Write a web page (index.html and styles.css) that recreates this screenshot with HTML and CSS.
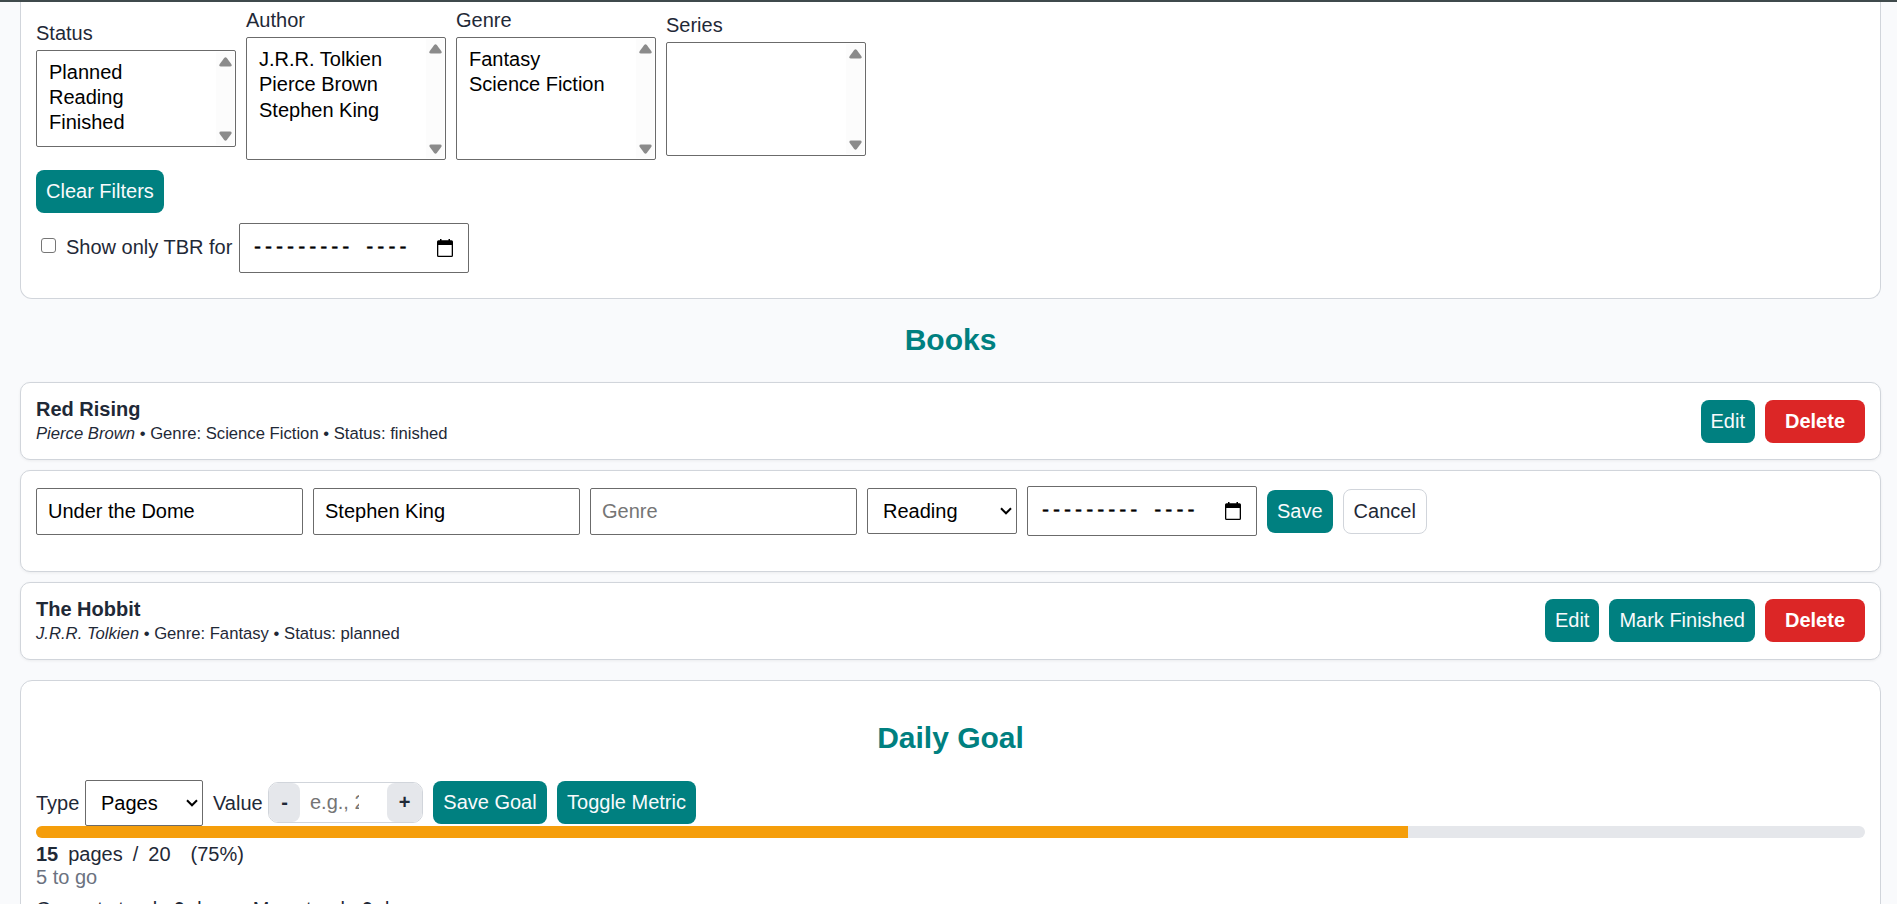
FILE: index.html
```
<!DOCTYPE html>
<html lang="en">
<head>
<meta charset="utf-8">
<title>Books</title>
<link rel="stylesheet" href="styles.css">
</head>
<body>
<svg class="defs" aria-hidden="true">
  <symbol id="up" viewBox="0 0 13 10"><path d="M5.2 1Q6.5-.4 7.8 1L12.4 7.3Q13.200 9.500 11 9.500H2Q-.2 9.500.6 7.300Z" fill="#8b8b8b"/></symbol>
  <symbol id="cal" viewBox="0 0 16 18"><path d="M3 0h1.500v1.300h7V0H13v1.300h1.500Q16 1.300 16 2.800v13.700Q16 18 14.500 18h-13Q0 18 0 16.500V2.800Q0 1.300 1.500 1.300H3ZM1.300 6v10.700h13.400V6Z" fill="#000" fill-rule="evenodd"/></symbol>
  <symbol id="chev" viewBox="0 0 12 8"><path d="M1 1.300 6 6.300 11 1.300" fill="none" stroke="#000" stroke-width="2"/></symbol>
</svg>
<div class="topbar"></div>
<main class="page">
  <section class="card filters">
    <div class="filter-row">
      <div class="field"><span>Status</span>
        <div class="listbox h-status"><div class="options"><div>Planned</div><div>Reading</div><div>Finished</div></div><div class="track"><svg><use href="#up"/></svg><svg class="down"><use href="#up"/></svg></div></div></div>
      <div class="field"><span>Author</span>
        <div class="listbox h-tall"><div class="options"><div>J.R.R. Tolkien</div><div>Pierce Brown</div><div>Stephen King</div></div><div class="track"><svg><use href="#up"/></svg><svg class="down"><use href="#up"/></svg></div></div></div>
      <div class="field"><span>Genre</span>
        <div class="listbox h-tall"><div class="options"><div>Fantasy</div><div>Science Fiction</div></div><div class="track"><svg><use href="#up"/></svg><svg class="down"><use href="#up"/></svg></div></div></div>
      <div class="field"><span>Series</span>
        <div class="listbox h-series"><div class="options"></div><div class="track"><svg><use href="#up"/></svg><svg class="down"><use href="#up"/></svg></div></div></div>
    </div>
    <button class="btn">Clear Filters</button>
    <div class="tbr"><input type="checkbox" class="check"><span class="tbr-label">Show only TBR for</span>
      <div class="month"><span class="dashes">---------</span><span class="dashes year">----</span><svg class="cal"><use href="#cal"/></svg></div></div>
  </section>

  <h2>Books</h2>
  <div class="books">
    <article class="card book">
      <div class="info"><div class="title">Red Rising</div><div class="meta"><em>Pierce Brown</em> • Genre: Science Fiction • Status: finished</div></div>
      <div class="actions"><button class="btn">Edit</button><button class="btn danger">Delete</button></div>
    </article>
    <article class="card edit">
      <input class="text" value="Under the Dome"><input class="text" value="Stephen King"><input class="text" placeholder="Genre">
      <div class="select w-status"><span>Reading</span><svg class="chev"><use href="#chev"/></svg></div>
      <div class="month"><span class="dashes">---------</span><span class="dashes year">----</span><svg class="cal"><use href="#cal"/></svg></div>
      <button class="btn">Save</button><button class="btn ghost">Cancel</button>
    </article>
    <article class="card book">
      <div class="info"><div class="title">The Hobbit</div><div class="meta"><em>J.R.R. Tolkien</em> • Genre: Fantasy • Status: planned</div></div>
      <div class="actions last"><button class="btn">Edit</button><button class="btn">Mark Finished</button><button class="btn danger">Delete</button></div>
    </article>
  </div>

  <section class="card goal">
    <h2>Daily Goal</h2>
    <div class="goal-row">
      <span class="type">Type</span>
      <div class="select w-type"><span>Pages</span><svg class="chev"><use href="#chev"/></svg></div>
      <span class="value">Value</span>
      <div class="stepper"><button class="minus">-</button><span class="num">e.g., 20</span><button class="plus">+</button></div>
      <button class="btn save-goal">Save Goal</button><button class="btn toggle">Toggle Metric</button>
    </div>
    <div class="bar"><div class="fill" style="width:75%"></div></div>
    <div class="stats"><b>15</b><span class="unit">pages</span><span class="slash">/</span><span class="total">20</span><span class="pct">(75%)</span></div>
    <div class="togo">5 to go</div>
    <div class="streak"><span>Current streak: <b>0</b> days</span><span>Max streak: <b>0</b> days</span></div>
  </section>
</main>
</body>
</html>
```
FILE: styles.css
```
* { box-sizing: border-box; }
html { overflow: hidden; }
body {
  margin: 0;
  height: 904px;
  overflow: hidden;
  background: #f9fafc;
  color: #1f2937;
  font: 20px/23px "Liberation Sans", Arial, sans-serif;
}
.defs { display: block; width: 0; height: 0; }
.topbar { height: 2px; background: #3f4a4c; }
.page { padding: 0 16px 0 20px; }
.card {
  background: #fff;
  border: 1px solid #d1d5db;
  border-radius: 10px;
  box-shadow: 0 1px 3px rgba(0, 0, 0, .06);
}
.filters {
  height: 297px;
  padding: 7px 15px 0;
  border-top: 0;
  border-radius: 0 0 12px 12px;
  box-shadow: none;
}
.filter-row { display: flex; align-items: center; gap: 10px; margin-bottom: 10px; }
.field { display: flex; flex-direction: column; gap: 5px; }
.listbox {
  display: flex;
  width: 200px;
  padding: 1px;
  background: #fff;
  border: 1px solid #6b6b6b;
  border-radius: 2px;
  color: #000;
}
.h-status { height: 97px; }
.h-tall { height: 123px; }
.h-series { height: 114px; }
.options { flex: 1; padding: 8px 11px; line-height: 25px; }
.h-tall .options { line-height: 25.300px; }
.track {
  display: flex;
  flex-direction: column;
  justify-content: space-between;
  align-items: center;
  width: 18px;
  padding: 5px 0 4px;
  background: #fcfcfc;
}
.track svg { width: 13px; height: 10px; }
.track .down { transform: rotate(180deg); }
.btn {
  height: 43px;
  padding: 0 10px;
  border: 0;
  border-radius: 8px;
  background: teal;
  color: #f9fafc;
  font: inherit;
  white-space: nowrap;
  display: block;
}
.danger { width: 100px; background: #dc2626; color: #fff; font-weight: bold; }
.ghost { height: 45px; border: 1px solid #d1d5db; background: #fff; color: #1f2937; }
.tbr { display: flex; align-items: center; margin-top: 10px; height: 50px; }
.check {
  appearance: none;
  width: 15px;
  height: 15px;
  margin: 0 10px 5px 5px;
  border: 1px solid #767676;
  border-radius: 3px;
  background: #fff;
}
.tbr-label { width: 173px; padding-bottom: 2px; white-space: nowrap; }
.month {
  display: flex;
  align-items: center;
  width: 230px;
  height: 50px;
  padding: 0 15px 0 12px;
  border: 1px solid #6b6b6b;
  border-radius: 2px;
  background: #fff;
  color: #000;
}
.dashes { font-family: "Liberation Mono", monospace; font-size: 18.400px; -webkit-text-stroke: .5px #000; }
.year { margin-left: 13px; }
.cal { width: 16px; height: 18px; margin-left: auto; }
h2 { margin: 0; text-align: center; color: teal; font-size: 30px; line-height: 34px; }
.filters + h2 { padding: 24px 0 25px; }
.books { display: grid; gap: 10px; }
.book { display: flex; justify-content: space-between; height: 78px; padding: 15px; }
.title { font-weight: bold; }
.meta { font-size: 16.670px; line-height: 25px; }
.actions { display: flex; gap: 10px; padding-top: 2px; }
.last { padding-top: 1px; }
.edit { display: flex; align-items: center; gap: 10px; height: 102px; padding: 0 15px 20px; }
.text {
  width: 267px;
  height: 47px;
  padding: 0 11px;
  border: 1px solid #6b6b6b;
  border-radius: 2px;
  background: #fff;
  color: #000;
  font: inherit;
}
.text::placeholder { color: #757575; }
.select {
  display: flex;
  align-items: center;
  justify-content: space-between;
  height: 46px;
  padding: 0 4px 0 15px;
  border: 1px solid #6b6b6b;
  border-radius: 2px;
  background: #fff;
  color: #000;
}
.w-status { width: 150px; }
.w-type { width: 118px; }
.chev { width: 12px; height: 8px; }
.goal { height: 300px; margin-top: 20px; padding: 40px 15px 0; border-radius: 12px; box-shadow: none; }
.goal-row { display: flex; align-items: center; gap: 10px; margin-top: 25px; height: 46px; }
.goal-row .btn, .stepper { margin-bottom: 2px; }
.type { width: 39px; }
.value { width: 45px; }
.stepper {
  display: flex;
  width: 155px;
  height: 41px;
  border: 1px solid #d1d5db;
  border-radius: 10px;
  overflow: hidden;
  background: #fff;
}
.stepper button { border: 0; padding: 0; background: #e5e7eb; color: #1f2937; font: inherit; font-weight: bold; }
.minus { width: 31px; border-radius: 8px; }
.plus { width: 35px; border-radius: 8px; }
.num { width: 49px; margin: 0 28px 0 10px; overflow: hidden; white-space: nowrap; color: #757575; line-height: 39px; }
.save-goal { width: 114px; }
.toggle { width: 139px; }
.bar { height: 12px; border-radius: 6px; overflow: hidden; background: #e5e7eb; }
.fill { height: 100%; background: #f59e0b; }
.stats { display: flex; margin-top: 5px; }
.unit { margin-left: 10px; }
.slash { margin-left: 10px; }
.total { margin-left: 10px; }
.pct { margin-left: 20px; }
.togo { color: #6b7280; }
.streak { display: flex; gap: 20px; margin-top: 9px; }
```
